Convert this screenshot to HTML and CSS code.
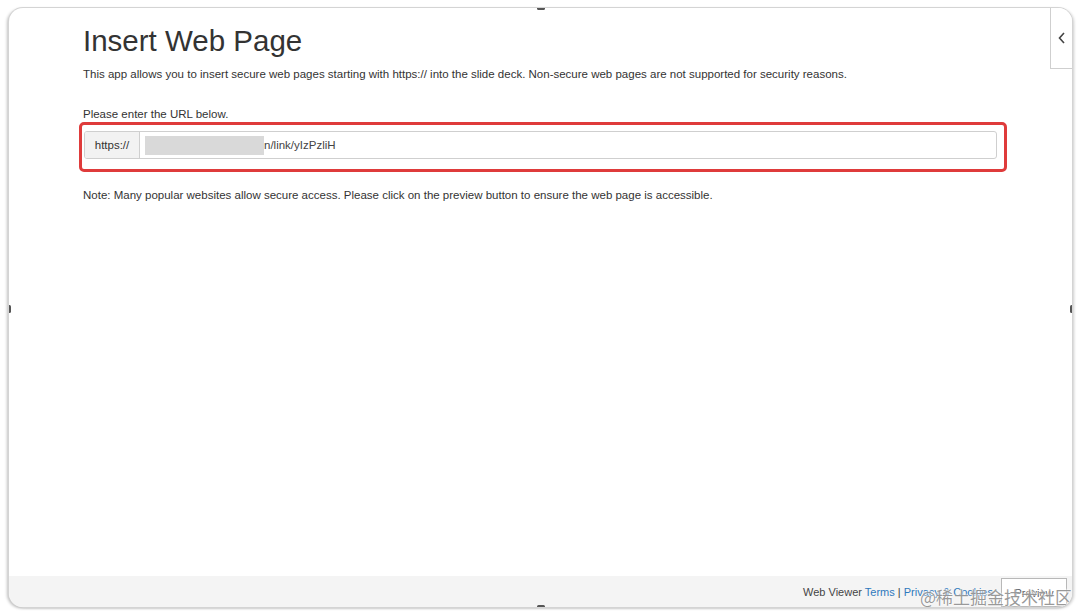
FILE: index.html
```html
<!DOCTYPE html>
<html>
<head>
<meta charset="utf-8">
<link rel="stylesheet" href="styles.css">
</head>
<body>
<div class="card">
  <span class="handle handle-top"></span>
  <span class="handle handle-bottom"></span>
  <span class="handle handle-left"></span>
  <span class="handle handle-right"></span>
  <div class="side-tab">
    <svg width="8" height="12" viewBox="0 0 8 12"><path d="M6 1 L1.5 6 L6 11" fill="none" stroke="#444" stroke-width="1.6"/></svg>
  </div>
  <div class="main">
    <h1 class="title">Insert Web Page</h1>
    <p class="desc">This app allows you to insert secure web pages starting with https:// into the slide deck. Non-secure web pages are not supported for security reasons.</p>
    <p class="label">Please enter the URL below.</p>
    <div class="highlight">
      <div class="input-group">
        <span class="prefix">https://</span>
        <div class="field"><span class="redact"></span><span class="url">n/link/yIzPzliH</span></div>
      </div>
    </div>
    <p class="note">Note: Many popular websites allow secure access. Please click on the preview button to ensure the web page is accessible.</p>
  </div>
  <div class="footer">
    <span class="links">Web Viewer <a>Terms</a> | <a>Privacy &amp; Cookies</a></span>
    <button class="preview">Preview</button>
  </div>
  <span class="watermark">@稀土掘金技术社区</span>
</div>
</body>
</html>
```
FILE: styles.css
```css
html, body {
  margin: 0;
  padding: 0;
  background: #ffffff;
}
body {
  font-family: "Liberation Sans", Arial, sans-serif;
  color: #333;
  width: 1080px;
  height: 615px;
  overflow: hidden;
}
.card {
  position: relative;
  margin: 8px 8px 0 9px;
  height: 599px;
  border-radius: 14px;
  background: #fff;
  box-shadow: 0 0 0 1px #d4d4d4, -2px 1px 3px rgba(0,0,0,0.25), 2px 1px 3px rgba(0,0,0,0.2);
  display: flex;
  flex-direction: column;
  overflow: hidden;
}
.main {
  flex: 1;
  padding: 15px 0 0 74px;
  box-sizing: border-box;
}
.title {
  margin: 0;
  font-weight: normal;
  font-size: 29.5px;
  line-height: 36px;
  color: #333;
}
.desc {
  margin: 8px 0 0;
  font-size: 11.5px;
  line-height: 15px;
  color: #333;
}
.label {
  margin: 25px 0 0;
  font-size: 11.5px;
  line-height: 15px;
  color: #333;
}
.highlight {
  margin: 0 0 0 -4px;
  width: 920px;
  height: 38px;
  border: 3px solid #df3b3b;
  border-radius: 5px;
  padding: 6px 0 0 2px;
  box-sizing: content-box;
}
.input-group {
  display: flex;
  width: 913px;
  height: 28px;
  border: 1px solid #cfcfcf;
  border-radius: 3px;
  box-sizing: border-box;
  overflow: hidden;
}
.prefix {
  display: flex;
  align-items: center;
  justify-content: center;
  width: 54px;
  background: #f2f2f2;
  border-right: 1px solid #cfcfcf;
  font-size: 11.5px;
  color: #333;
}
.field {
  flex: 1;
  display: flex;
  align-items: center;
  padding-left: 5px;
  font-size: 11.5px;
  color: #444;
}
.redact {
  display: inline-block;
  width: 119px;
  height: 19px;
  background: #d9d9d9;
}
.note {
  margin: 16px 0 0;
  font-size: 11.5px;
  line-height: 15px;
  color: #333;
}
.footer {
  height: 31px;
  background: #f4f4f4;
  display: flex;
  align-items: center;
  justify-content: flex-end;
  padding-right: 5px;
  gap: 8px;
}
.links {
  font-size: 11px;
  color: #444;
}
.links a {
  color: #2e79bd;
}
.preview {
  width: 66px;
  height: 29px;
  margin-top: 2px;
  background: #fff;
  border: 1px solid #b8b8b8;
  font-family: "Liberation Sans", Arial, sans-serif;
  font-size: 11px;
  color: #555;
  padding: 0;
}
.side-tab {
  position: absolute;
  right: 0;
  top: 0;
  width: 21px;
  height: 60px;
  border-left: 1px solid #cfcfcf;
  border-bottom: 1px solid #cfcfcf;
  background: #fff;
  display: flex;
  align-items: center;
  justify-content: center;
}
.handle {
  position: absolute;
  background: #555;
  border-radius: 2px;
}
.handle-top { top: -1px; left: 528px; width: 8px; height: 3px; }
.handle-bottom { bottom: -1px; left: 528px; width: 8px; height: 3px; }
.handle-left { left: -1px; top: 297px; width: 3px; height: 8px; }
.handle-right { right: -1px; top: 297px; width: 3px; height: 8px; }
.watermark {
  position: absolute;
  right: 0;
  bottom: 0;
  font-family: "Noto Sans CJK SC", serif;
  font-size: 17px;
  line-height: 20px;
  color: rgba(120,120,120,0.75);
  text-shadow: 0 0 2px #fff, 0 0 2px #fff;
}
```
